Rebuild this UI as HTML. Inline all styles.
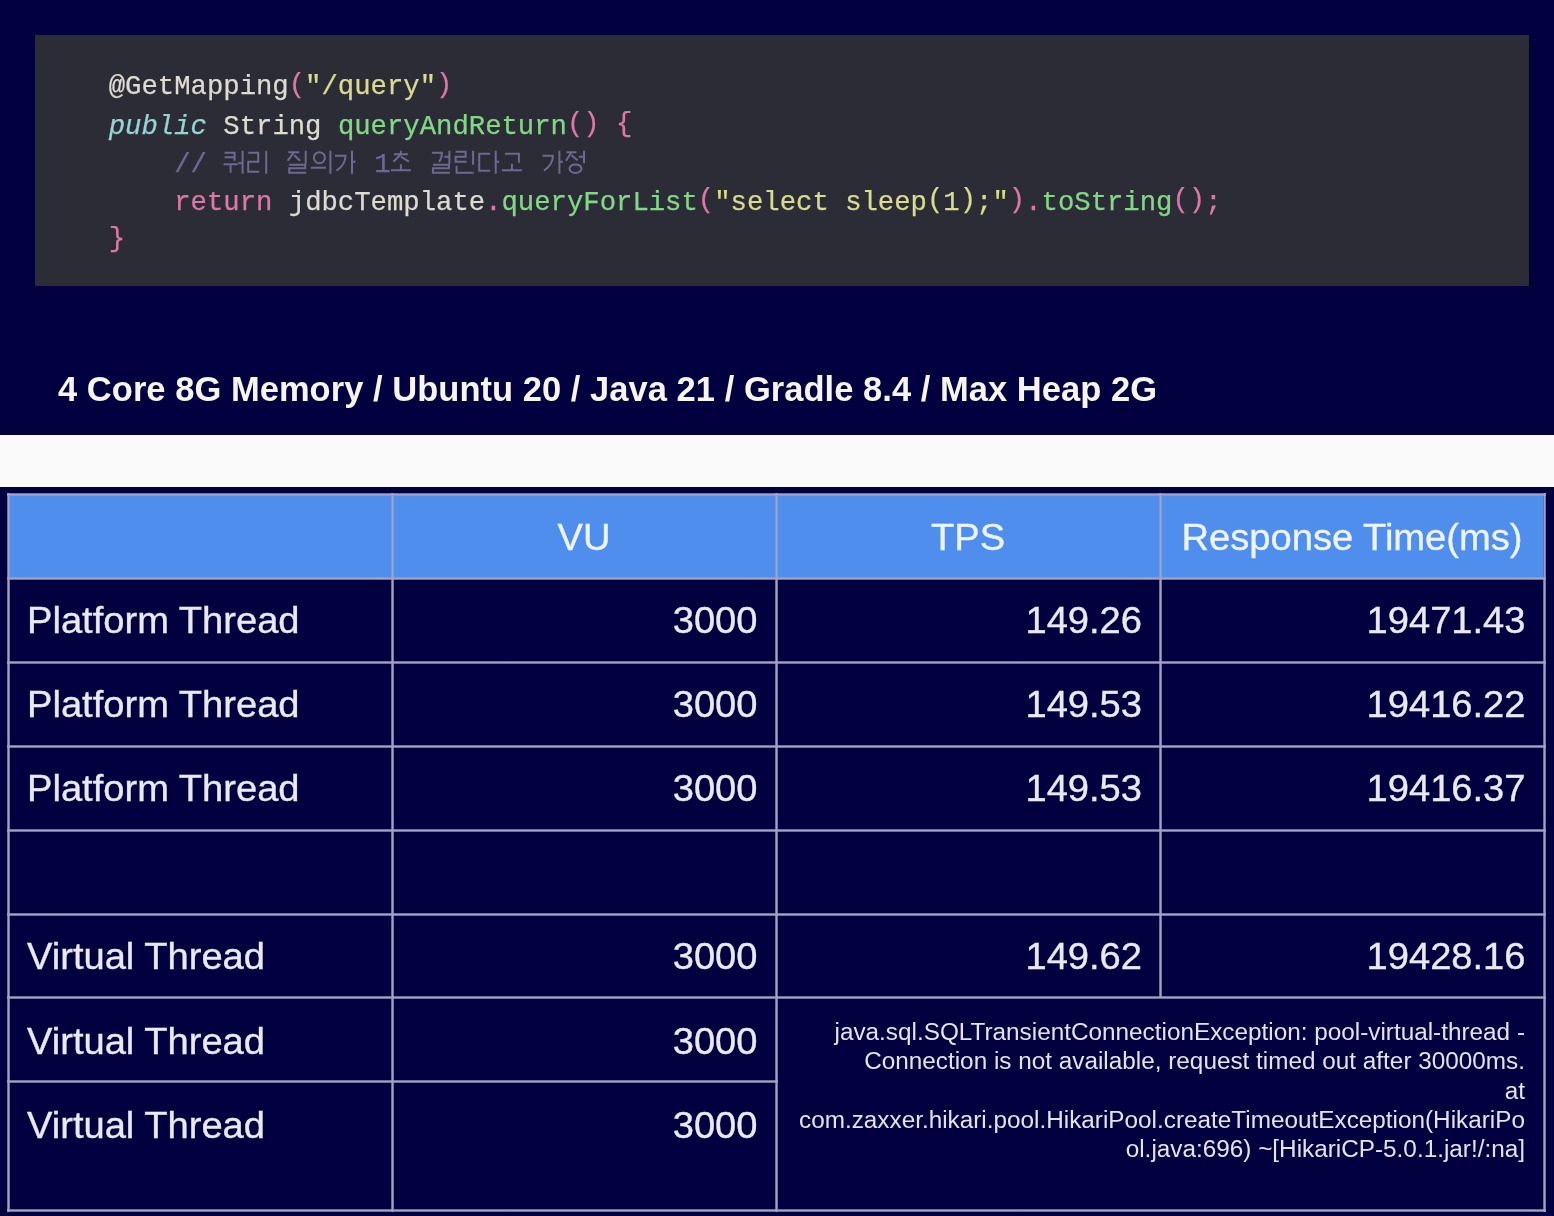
<!DOCTYPE html>
<html><head><meta charset="utf-8">
<style>
html,body{margin:0;padding:0;}
body{width:1554px;height:1216px;position:relative;overflow:hidden;background:#fafafa;font-family:"Liberation Sans",sans-serif;}
.abs{position:absolute;}
#top{left:0;top:0;width:1554px;height:435px;background:#02003e;}
#code{left:35px;top:35px;width:1494px;height:251px;background:#2c2c36;}
.cl{position:absolute;white-space:pre;font-family:"Liberation Mono",monospace;font-size:27.27px;line-height:40px;color:#dedbd0;-webkit-text-stroke:0.25px currentColor;}
.w{color:#dedbd0}.p{color:#dc78a8}.y{color:#d9db8f}.g{color:#82d886}.c{color:#94d4d6;font-style:italic}.cm{color:#6c6a92}.u{position:relative;top:-2.5px}
#spec{left:58px;white-space:pre;font-weight:bold;font-size:34.5px;line-height:40px;color:#f6f4ee;letter-spacing:0.035px;}
#tbl{left:0;top:487px;width:1554px;height:729px;background:#02003e;}
#hdr{left:9px;top:495px;width:1534px;height:83px;background:#4f8eec;}
.hl{position:absolute;height:3px;background:linear-gradient(to bottom,rgba(150,150,185,.45),#a4a4c0 35%,#a4a4c0 65%,rgba(150,150,185,.45));}
.vl{position:absolute;width:3px;background:linear-gradient(to right,rgba(150,150,185,.45),#a4a4c0 35%,#a4a4c0 65%,rgba(150,150,185,.45));}
.t{position:absolute;white-space:pre;font-size:37px;line-height:42px;color:#e9e9f3;-webkit-text-stroke:0.35px #e9e9f3;}
.tl{transform-origin:0 0;transform:scaleX(1.03);}
.tr{text-align:right;transform-origin:100% 0;transform:scaleX(1.03);}
.tc{text-align:center;color:#eef4ff;-webkit-text-stroke:0.35px #eef4ff;transform-origin:50% 0;transform:scaleX(1.03);}
.ex{position:absolute;white-space:pre;font-size:23.5px;line-height:29.3px;color:#e4e3ec;text-align:right;transform-origin:100% 0;transform:scaleX(1.0345);}
#wrap{position:absolute;left:0;top:0;width:1554px;height:1216px;filter:blur(0.45px);}
</style></head><body><div id="wrap">
<div id="top" class="abs">
<div id="code" class="abs"></div>
<div class="cl" style="left:108.75px;top:67.44px"><span class="w">@GetMapping</span><span class="p u">(</span><span class="y">"/query"</span><span class="p u">)</span></div>
<div class="cl" style="left:108.75px;top:106.94px"><span class="c">public</span> <span class="w">String</span> <span class="g">queryAndReturn</span><span class="p u">() {</span></div>
<div class="cl" style="left:108.75px;top:145.04px"><span class="cm">    //</span></div>
<div class="cl" style="left:374.26px;top:145.04px"><span class="cm">1</span></div>
<svg class="abs" style="left:0;top:0" width="700" height="200"><g fill="none" stroke="#6c6a92" stroke-width="2"><path transform="translate(223.6,150.7)" d="M1,2H11V10M1,6.5H11M0,13.5H14M7,13.5V22M19,0V23M14.5,12.5H19"/><path transform="translate(247.2,150.7)" d="M1,2H11V11H1V21H12M19,0V23"/><path transform="translate(287.2,150.7)" d="M1,1.5H12M7,1.5L0.5,10M7,4.5L13,10M18.5,0V13M2,14H18V17.5H2V22H19"/><path transform="translate(310.9,150.7)" d="M3,7A5.5,5.5 0 1 0 14,7A5.5,5.5 0 1 0 3,7M0,17H15M19.5,0V23"/><path transform="translate(334.5,150.7)" d="M0.5,5H11C11,11 8,16 2,20M17.5,0V23M17.5,11H21"/><path transform="translate(390.9,150.7)" d="M10,0V2.5M3,3.5H17M10,3.5L2.5,11M10,6L18,11M10,13.5V19M0,19.5H20"/><path transform="translate(430.9,150.7)" d="M1,2H11C11,6 10,9 8,11M18.5,0V13M13.5,6H18.5M2,14H18V17.5H2V22H19"/><path transform="translate(454.6,150.7)" d="M1,1H11V6H1V11H12M18.5,0V14M2,15V22H19"/><path transform="translate(478.2,150.7)" d="M12,3H1V20H12M17.5,0V23M17.5,11H21"/><path transform="translate(501.9,150.7)" d="M3,3H17V12M10,13V19.5M0,19.5H20"/><path transform="translate(541.9,150.7)" d="M0.5,5H11C11,11 8,16 2,20M17.5,0V23M17.5,11H21"/><path transform="translate(565.5,150.7)" d="M1,1.5H11M6,1.5L0.5,10M6,4.5L12,9.5M18.5,0V12.5M13.5,6H18.5M4,18A6,4.3 0 1 0 16,18A6,4.3 0 1 0 4,18"/></g></svg>
<div class="cl" style="left:108.75px;top:182.74px">    <span class="p">return</span> <span class="w">jdbcTemplate</span><span class="p">.</span><span class="g">queryForList</span><span class="p u">(</span><span class="y">"select sleep<span class="u">(</span>1<span class="u">)</span>;"</span><span class="p u">)</span><span class="p">.</span><span class="g">toString</span><span class="p u">()</span><span class="p">;</span></div>
<div class="cl" style="left:108.75px;top:220.44px"><span class="p" style="position:relative;top:-1px">}</span></div>
<div id="spec" class="abs" style="top:368.5px">4 Core 8G Memory / Ubuntu 20 / Java 21 / Gradle 8.4 / Max Heap 2G</div>
</div>
<div id="tbl" class="abs"></div>
<div id="hdr" class="abs"></div>
<div class="hl" style="left:7px;top:493px;width:1539px"></div>
<div class="hl" style="left:7px;top:577px;width:1539px"></div>
<div class="hl" style="left:7px;top:661px;width:1539px"></div>
<div class="hl" style="left:7px;top:745px;width:1539px"></div>
<div class="hl" style="left:7px;top:829px;width:1539px"></div>
<div class="hl" style="left:7px;top:913px;width:1539px"></div>
<div class="hl" style="left:7px;top:996px;width:1539px"></div>
<div class="hl" style="left:7px;top:1080px;width:771px"></div>
<div class="hl" style="left:7px;top:1209px;width:1539px"></div>
<div class="vl" style="left:7px;top:493px;height:719px"></div>
<div class="vl" style="left:391px;top:493px;height:719px"></div>
<div class="vl" style="left:775px;top:493px;height:719px"></div>
<div class="vl" style="left:1159px;top:493px;height:505px"></div>
<div class="vl" style="left:1543px;top:493px;height:719px"></div>
<div class="t tc" style="left:392px;width:384px;top:516.81px">VU</div>
<div class="t tc" style="left:776px;width:384px;top:516.81px">TPS</div>
<div class="t tc" style="left:1160px;width:384px;top:516.81px">Response Time(ms)</div>
<div class="t tl" style="left:27px;top:600.01px">Platform Thread</div>
<div class="t tr" style="left:392px;width:365.5px;top:600.01px">3000</div>
<div class="t tr" style="left:776px;width:366px;top:600.01px">149.26</div>
<div class="t tr" style="left:1160px;width:365.5px;top:600.01px">19471.43</div>
<div class="t tl" style="left:27px;top:684.11px">Platform Thread</div>
<div class="t tr" style="left:392px;width:365.5px;top:684.11px">3000</div>
<div class="t tr" style="left:776px;width:366px;top:684.11px">149.53</div>
<div class="t tr" style="left:1160px;width:365.5px;top:684.11px">19416.22</div>
<div class="t tl" style="left:27px;top:768.21px">Platform Thread</div>
<div class="t tr" style="left:392px;width:365.5px;top:768.21px">3000</div>
<div class="t tr" style="left:776px;width:366px;top:768.21px">149.53</div>
<div class="t tr" style="left:1160px;width:365.5px;top:768.21px">19416.37</div>
<div class="t tl" style="left:27px;top:936.41px">Virtual Thread</div>
<div class="t tr" style="left:392px;width:365.5px;top:936.41px">3000</div>
<div class="t tr" style="left:776px;width:366px;top:936.41px">149.62</div>
<div class="t tr" style="left:1160px;width:365.5px;top:936.41px">19428.16</div>
<div class="t tl" style="left:27px;top:1020.51px">Virtual Thread</div>
<div class="t tr" style="left:392px;width:365.5px;top:1020.51px">3000</div>
<div class="t tl" style="left:27px;top:1104.61px">Virtual Thread</div>
<div class="t tr" style="left:392px;width:365.5px;top:1104.61px">3000</div>
<div class="ex" style="left:776px;width:749px;top:1018.2px">java.sql.SQLTransientConnectionException: pool-virtual-thread -<br>Connection is not available, request timed out after 30000ms.<br>at<br>com.zaxxer.hikari.pool.HikariPool.createTimeoutException(HikariPo<br>ol.java:696) ~[HikariCP-5.0.1.jar!/:na]</div>
</div></body></html>
